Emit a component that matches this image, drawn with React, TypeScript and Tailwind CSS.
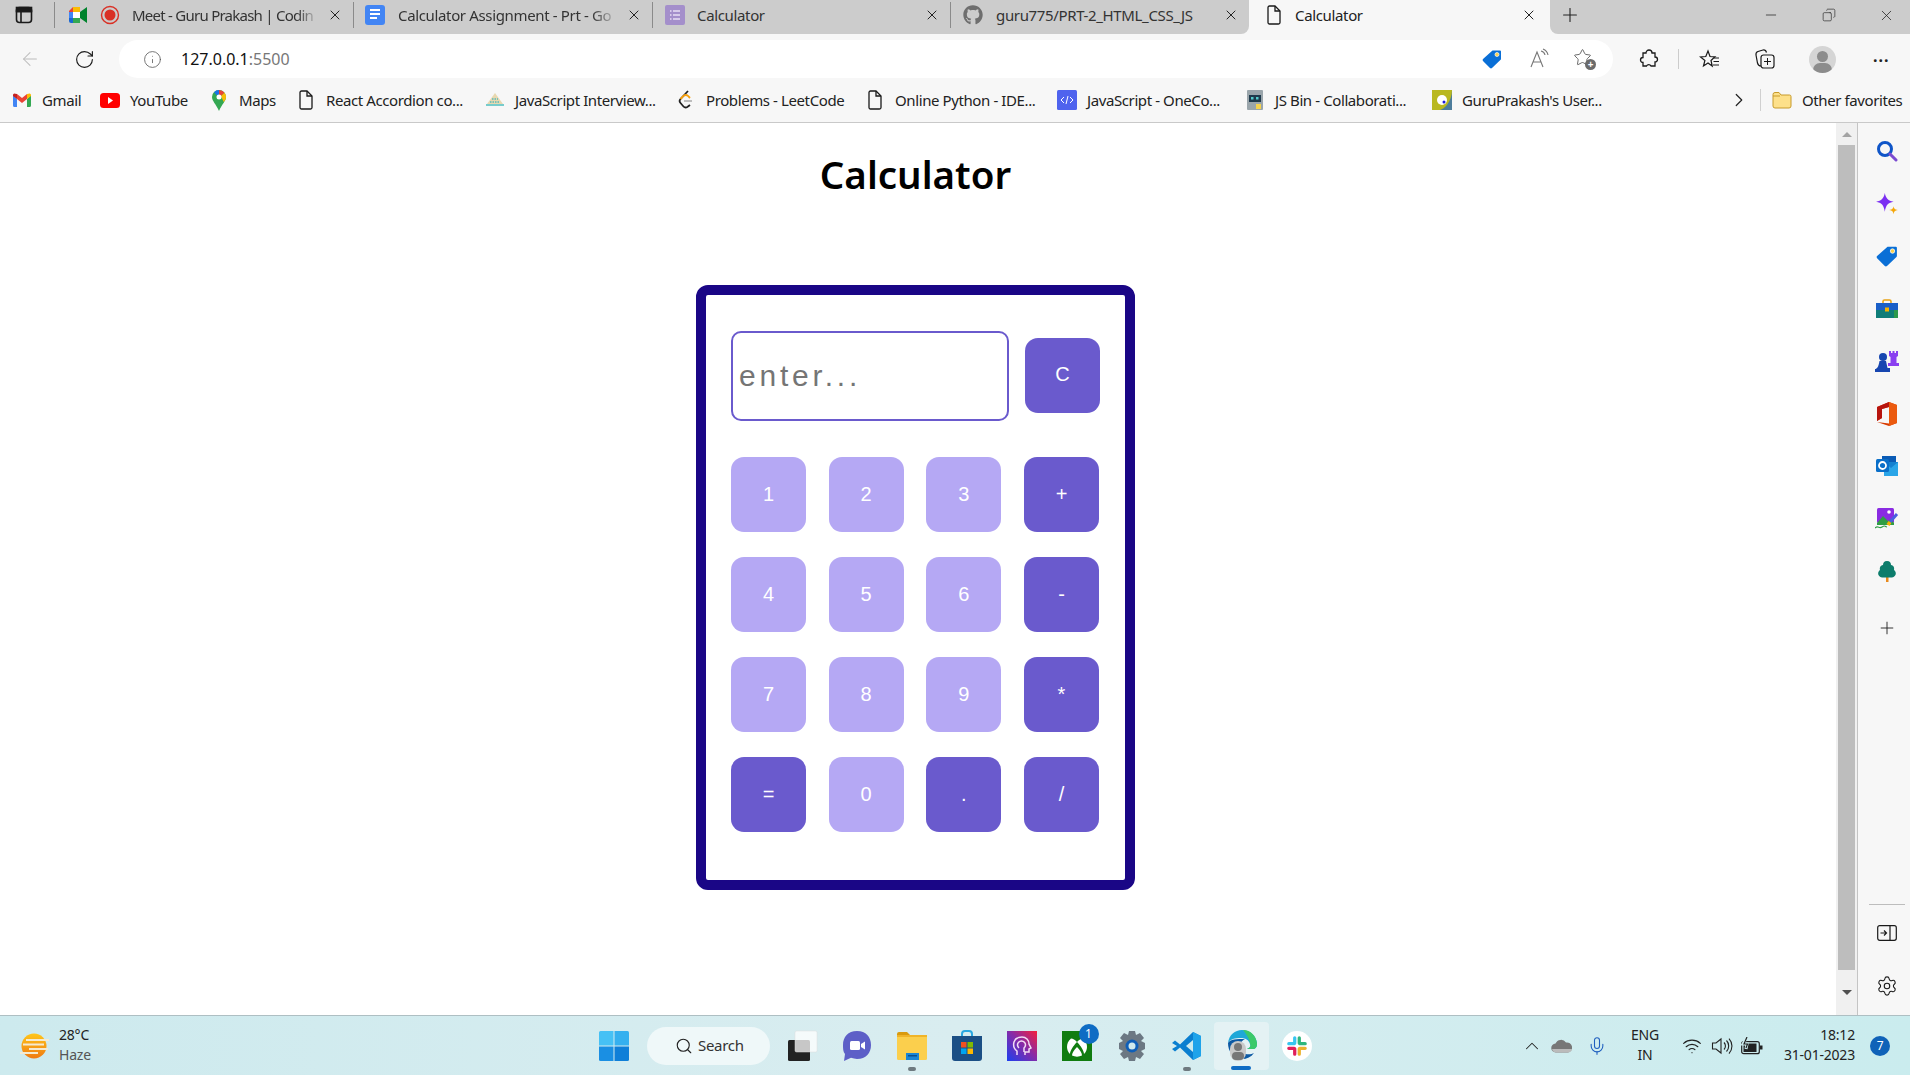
import React from "react";
import { ArrowLeft, RotateCw, Info, X, Plus, Minus, ChevronRight, ChevronUp, Mic, Wifi, Settings, Search, Star, Copy } from "lucide-react";
import { FaGithub } from "react-icons/fa";

const ui = "font-['Noto_Sans','Open_Sans',sans-serif]";

const SideTabs = () => (
  <svg width="18" height="18" viewBox="0 0 18 18" fill="none" stroke="#1a1a1a" strokeWidth="1.6"><rect x="1.5" y="1.5" width="15" height="15" rx="3" /><path d="M1.5 5.5h15M6 5.5v11" /><rect x="1.5" y="1.5" width="15" height="4" fill="#1a1a1a" /></svg>
);
const MeetIcon = () => (
  <svg width="20" height="18" viewBox="0 0 20 18"><path d="M1 5l4-4v5H1z" fill="#ea4335" /><path d="M5 1h7v5H5z" fill="#fbbc04" /><path d="M1 6h4v6H1z" fill="#4285f4" /><path d="M1 12h4v5H3a2 2 0 0 1-2-2z" fill="#1967d2" /><path d="M5 12h7v5H5z" fill="#34a853" /><path d="M12 1v5l7-5v16l-7-5v5a0 0 0 0 0 0 0z" fill="#00832d" /><path d="M5 6h7v6H5z" fill="#fff" /></svg>
);
const RecIcon = () => (
  <svg width="20" height="20" viewBox="0 0 20 20"><circle cx="10" cy="10" r="8.5" fill="none" stroke="#d93025" strokeWidth="1.4" /><circle cx="10" cy="10" r="5.5" fill="#d93025" /></svg>
);
const DocsIcon = () => (
  <svg width="20" height="20" viewBox="0 0 20 20"><rect width="20" height="20" rx="3" fill="#4285f4" /><path d="M5 5h10M5 9h10M5 13h7" stroke="#fff" strokeWidth="2" /></svg>
);
const FormsIcon = () => (
  <svg width="20" height="20" viewBox="0 0 20 20"><rect width="20" height="20" rx="2" fill="#a48fcb" /><path d="M8 6h7M8 10h7M8 14h7M5 6h1.5M5 10h1.5M5 14h1.5" stroke="#e8e0f5" strokeWidth="1.7" /></svg>
);
const PageIcon = ({ size = 20 }: { size?: number }) => (
  <svg width={size} height={size} viewBox="0 0 20 20" fill="none" stroke="#1a1a1a" strokeWidth="1.3"><path d="M4 2.5A1.5 1.5 0 0 1 5.500 1H11l5 5v11.500a1.500 1.500 0 0 1-1.500 1.500h-9A1.500 1.500 0 0 1 4 17.500z" /><path d="M11 1v5h5" /></svg>
);

const tabs = [
  { title: "Meet - Guru Prakash | Codin", icons: [<MeetIcon key="a" />, <RecIcon key="b" />], pl: "pl-[14px]", gap: "gap-[12px]", tgap: "ml-[12px]", text: "tracking-[-0.75px] [mask-image:linear-gradient(to_right,black_88%,transparent)]" },
  { title: "Calculator Assignment - Prt - Go", icons: [<DocsIcon key="a" />], pl: "pl-[12px]", gap: "", tgap: "ml-[13px]", text: "tracking-[-0.35px] [mask-image:linear-gradient(to_right,black_88%,transparent)]" },
  { title: "Calculator", icons: [<FormsIcon key="a" />], pl: "pl-[13px]", gap: "", tgap: "ml-[12px]", text: "tracking-[-0.35px]" },
  { title: "guru775/PRT-2_HTML_CSS_JS", icons: [<FaGithub key="a" size={20} color="#6e6e6e" />], pl: "pl-[13px]", gap: "", tgap: "ml-[13px]", text: "tracking-[-0.35px]" },
];

const Tab = ({ t, w }: { t: (typeof tabs)[number]; w: string }) => (
  <div className={`${w} h-[34px] flex items-center relative pb-[4px] ${t.pl}`}>
    <span className="absolute left-0 top-[2px] h-[26px] w-px bg-[#8a8a8a]" />
    <div className={`flex items-center shrink-0 ${t.gap}`}>{t.icons}</div>
    <span className={`${t.tgap} flex-1 min-w-0 whitespace-nowrap text-[15px] text-[#333] ${t.text}`}>{t.title}</span>
    <X size={16} strokeWidth={1.5} color="#222" className="ml-[8px] mr-[10px] shrink-0" />
  </div>
);

const TabStrip = () => (
  <div className="flex h-[34px] bg-[#f7f7f7]">
    <div className="flex bg-[#cccccc] rounded-br-lg">
      <div className="w-[54px] flex items-center pl-[15px] pb-[4px]"><SideTabs /></div>
      {tabs.map((t, i) => <Tab key={i} t={t} w={i === 2 ? "w-[298px]" : "w-[299px]"} />)}
    </div>
    <div className="w-[301px] flex items-center pl-[15px] pb-[4px] bg-[#f7f7f7]">
      <PageIcon />
      <span className="ml-[11px] flex-1 text-[15px] text-[#222] tracking-[-0.35px]">Calculator</span>
      <X size={16} strokeWidth={1.5} color="#222" className="mr-[13px]" />
    </div>
    <div className="flex-1 flex items-center pb-[4px] bg-[#cccccc] rounded-bl-lg">
      <Plus size={22} strokeWidth={1.2} color="#222" className="ml-[9px]" />
      <Minus size={16} strokeWidth={1.1} color="#222" className="ml-[182px]" />
      <Copy size={14} strokeWidth={1.1} color="#222" className="ml-[43px] -scale-x-100" />
      <X size={17} strokeWidth={1.1} color="#222" className="ml-[42px]" />
    </div>
  </div>
);

const PriceTag = ({ size = 20 }: { size?: number }) => (
  <svg width={size} height={size} viewBox="0 0 20 20"><path d="M10.500 1.500H18a1 1 0 0 1 1 1V10a1 1 0 0 1-.4.800L10 19a1.500 1.500 0 0 1-2 0L1 12a1.500 1.500 0 0 1 0-2z" fill="#0a6fd6" /><circle cx="15" cy="5.500" r="2" fill="#fbd24e" stroke="#fff" strokeWidth=".7" /></svg>
);
const ReadAloud = () => (
  <svg width="22" height="22" viewBox="0 0 22 22" fill="none" stroke="#777" strokeWidth="1.1"><path d="M2 19L8 4l6 15M4.500 14h7" /><path d="M12 3a5 5 0 0 1 4 4M14 1a8 8 0 0 1 5 6" /></svg>
);
const FavAdd = () => (
  <div className="relative w-[22px] h-[22px]">
    <Star size={19} strokeWidth={1.1} color="#555" className="absolute left-0 top-0" />
    <span className="absolute right-[-1px] bottom-0 w-[11px] h-[11px] rounded-full bg-[#6b6b6b] text-white text-[10px] leading-[10px] text-center font-bold">+</span>
  </div>
);
const PuzzleIcon = () => (
  <svg width="20" height="20" viewBox="0 0 20 20" fill="none" stroke="#1a1a1a" strokeWidth="1.3"><path d="M7 4a3 3 0 0 1 6 0h3v4a2.500 2.500 0 0 1 0 5v4h-4a2.500 2.500 0 0 0-4.500 0H4v-3.500a2.500 2.500 0 0 1 0-5V4z" /></svg>
);
const FavList = () => (
  <svg width="22" height="20" viewBox="0 0 22 20" fill="none" stroke="#1a1a1a" strokeWidth="1.2"><path d="M9 2l2 5.500 5 .3-4 3.700 1.200 5.500L9 14l-4.500 3 1.400-5.500L1.500 8l5.300-.5z" /><path d="M15 9h5M14.500 12.500h5.500M14 16h6" /></svg>
);
const Collections = () => (
  <svg width="22" height="22" viewBox="0 0 22 22" fill="none" stroke="#1a1a1a" strokeWidth="1.2"><rect x="7" y="7" width="13" height="13" rx="2.500" /><path d="M13.500 10v7M10 13.500h7" strokeWidth="1" /><path d="M7 18c-2 0-3-1-3.500-3L2 7c-.3-2 .5-3 2-3.500L9 2c2-.3 3 .5 3.500 2.500" /></svg>
);
const Avatar = () => (
  <div className="w-[27px] h-[27px] rounded-full bg-[#d5d5d5] overflow-hidden relative">
    <span className="absolute left-[8px] top-[5px] w-[11px] h-[11px] rounded-full bg-[#8c8c8c]" />
    <span className="absolute left-[4px] top-[17px] w-[19px] h-[14px] rounded-full bg-[#8c8c8c]" />
  </div>
);

const Toolbar = () => (
  <div className="h-[44px] bg-[#f7f7f7] flex items-end">
    <div className="h-[38px] flex items-center w-full">
      <ArrowLeft size={22} strokeWidth={1.1} color="#bcbcbc" className="ml-[19px]" />
      <RotateCw size={21} strokeWidth={1.3} color="#1a1a1a" className="ml-[33px]" />
      <div className="ml-[24px] w-[1494px] h-[38px] rounded-full bg-white flex items-center">
        <Info size={19} strokeWidth={1} color="#555" className="ml-[24px]" />
        <span className="ml-[19px] text-[16px] text-[#111]">127.0.0.1<span className="text-[#777]">:5500</span></span>
        <div className="ml-auto"><PriceTag /></div>
        <div className="ml-[27px]"><ReadAloud /></div>
        <div className="ml-[22px] mr-[18px]"><FavAdd /></div>
      </div>
      <div className="ml-[26px]"><PuzzleIcon /></div>
      <span className="ml-[19px] w-px h-[20px] bg-[#ccc]" />
      <div className="ml-[20px]"><FavList /></div>
      <div className="ml-[33px]"><Collections /></div>
      <div className="ml-[33px]"><Avatar /></div>
      <span className="ml-[37px] text-[#222] text-[16px] font-bold leading-none tracking-[1px] -mt-[6px]">...</span>
    </div>
  </div>
);

const GmailIcon = () => (
  <svg width="18" height="14" viewBox="0 0 18 14"><path d="M0 2v10.500A1.500 1.500 0 0 0 1.500 14H4V6z" fill="#4285f4" /><path d="M18 2v10.500a1.500 1.500 0 0 1-1.500 1.500H14V6z" fill="#34a853" /><path d="M14 1v5l4-3V2a1.500 1.500 0 0 0-2.400-1.200z" fill="#fbbc04" /><path d="M4 6V1l5 4 5-4v5L9 10z" fill="#ea4335" /><path d="M0 2v1l4 3V1L2.400.800A1.500 1.500 0 0 0 0 2z" fill="#c5221f" /></svg>
);
const YtIcon = () => (
  <svg width="20" height="15" viewBox="0 0 20 15"><rect width="20" height="15" rx="3.500" fill="#f00" /><path d="M8 4l5 3.500-5 3.500z" fill="#fff" /></svg>
);
const MapsIcon = () => (
  <svg width="14" height="21" viewBox="0 0 14 21"><path d="M7 0a7 7 0 0 1 7 7c0 4-4 7-7 14C4 14 0 11 0 7a7 7 0 0 1 7-7z" fill="#34a853" /><path d="M2 2.200A7 7 0 0 1 7 0v4.500a2.500 2.500 0 0 0-2 1z" fill="#1a73e8" /><path d="M7 0a7 7 0 0 1 5.500 2.700L9 6a2.500 2.500 0 0 0-2-1.500z" fill="#ea4335" /><path d="M12.500 2.700A7 7 0 0 1 14 7c0 2-1 3.500-2.300 5L9 6z" fill="#fbbc04" /><circle cx="7" cy="7" r="2.500" fill="#fff" /></svg>
);
const PyrIcon = () => (
  <svg width="20" height="16" viewBox="0 0 20 16"><path d="M10 1L2 12h16z" fill="#e8d8b0" /><path d="M1 12h18v2H1z" fill="#7cc" /><path d="M7 7h6M5 10h10" stroke="#5bb" strokeWidth="1.5" strokeDasharray="1.500 1" /></svg>
);
const LeetIcon = () => (
  <svg width="16" height="20" viewBox="0 0 16 20" fill="none"><path d="M10 1L2.500 9a3 3 0 0 0 0 4l3 3.500a3 3 0 0 0 4.500 0L12 15" stroke="#222" strokeWidth="1.800" /><path d="M2.500 9l3-3a3 3 0 0 1 4.500 0L12 8" stroke="#f59e0b" strokeWidth="1.800" /><path d="M6 11h8" stroke="#aaa" strokeWidth="1.500" /></svg>
);
const OneIcon = () => (
  <svg width="20" height="20" viewBox="0 0 20 20"><rect width="20" height="20" rx="1.500" fill="#4f63ee" /><path d="M7 7l-3 3 3 3M13 7l3 3-3 3M11 6l-2 8" stroke="#fff" strokeWidth="1" fill="none" /></svg>
);
const BinIcon = () => (
  <svg width="16" height="20" viewBox="0 0 16 20"><rect width="16" height="20" rx="1" fill="#9aa5ab" /><rect x="2" y="5" width="12" height="7" fill="#1f3a4d" /><rect x="4" y="7" width="2.500" height="2.500" fill="#5cc" /><rect x="9" y="7" width="2.500" height="2.500" fill="#5cc" /><rect x="9" y="14" width="5" height="5" fill="#f5d24e" /></svg>
);
const GuruIcon = () => (
  <svg width="20" height="20" viewBox="0 0 20 20"><rect width="20" height="20" fill="#b9b820" /><path d="M20 0v20H8c4-1 12-8 12-20z" fill="#4d7d9c" /><circle cx="10" cy="10" r="5" fill="#fff" /><circle cx="12" cy="12" r="1.500" fill="#1a1add" /></svg>
);
const FolderIcon = () => (
  <svg width="20" height="18" viewBox="0 0 20 18"><path d="M1 3.500A2 2 0 0 1 3 1.500h4l2 2.500h8.500a1.500 1.500 0 0 1 1.500 1.500V15a2 2 0 0 1-2 2H3a2 2 0 0 1-2-2z" fill="#fde08a" stroke="#c79a2b" strokeWidth="1" /><path d="M1 5h7" stroke="#c79a2b" strokeWidth="1" /></svg>
);

const bookmarks = [
  { n: "Gmail", i: <GmailIcon />, w: "w-[38px]" },
  { n: "YouTube", i: <YtIcon />, w: "w-[59px]" },
  { n: "Maps", i: <MapsIcon />, w: "w-[37px]" },
  { n: "React Accordion co...", i: <PageIcon />, w: "w-[139px]" },
  { n: "JavaScript Interview...", i: <PyrIcon />, w: "w-[141px]" },
  { n: "Problems - LeetCode", i: <LeetIcon />, w: "w-[139px]" },
  { n: "Online Python - IDE...", i: <PageIcon />, w: "w-[142px]" },
  { n: "JavaScript - OneCo...", i: <OneIcon />, w: "w-[138px]" },
  { n: "JS Bin - Collaborati...", i: <BinIcon />, w: "w-[137px]" },
  { n: "GuruPrakash's User...", i: <GuruIcon />, w: "w-[139px]" },
];

const Bookmarks = () => (
  <div className="h-[45px] bg-[#f7f7f7] border-b border-[#c9c9c9] flex items-center pl-[12px]">
    <div className="flex items-center gap-x-[20px]">
      {bookmarks.map((b) => (
        <div key={b.n} className="flex items-center">
          <div className="w-[20px] flex justify-center">{b.i}</div>
          <span className={`${b.w} ml-[10px] whitespace-nowrap text-[15px] text-[#222] tracking-[-0.4px]`}>{b.n}</span>
        </div>
      ))}
    </div>
    <ChevronRight size={22} strokeWidth={1.3} color="#222" className="ml-[127px]" />
    <span className="ml-[10px] w-px h-[22px] bg-[#d0d0d0]" />
    <div className="ml-[11px]"><FolderIcon /></div>
    <span className="ml-[10px] whitespace-nowrap text-[15px] text-[#222] tracking-[-0.4px]">Other favorites</span>
  </div>
);

const Key = ({ k, dark }: { k: string; dark?: boolean }) => (
  <button className={`w-[75px] h-[75px] pb-[2px] rounded-[13px] text-white text-[20px] ${dark ? "bg-[#6a5acd]" : "bg-[#b5a8f4]"}`}>{k}</button>
);

const keys: [string, boolean][] = [
  ["1", false], ["2", false], ["3", false], ["+", true],
  ["4", false], ["5", false], ["6", false], ["-", true],
  ["7", false], ["8", false], ["9", false], ["*", true],
  ["=", true], ["0", false], [".", true], ["/", true],
];

const Calculator = () => (
  <div className="w-[1831px] flex flex-col items-center font-['Liberation_Sans',Arial,sans-serif]">
    <h1 className={`mt-[28px] h-[46px] text-[38.5px] leading-[46px] font-semibold text-black ${ui}`}>Calculator</h1>
    <div className="mt-[88px] w-[439px] h-[605px] border-[10px] border-[#1a0686] rounded-[12px] bg-white pl-[25px] pt-[36px]">
      <div className="flex items-center">
        <input readOnly placeholder="enter..." className="w-[278px] h-[90px] border-2 border-[#6a5acd] rounded-[10px] px-[6px] text-[30px] tracking-[3.8px] outline-none placeholder:text-[#757575]" />
        <button className="ml-[16px] -mt-[2px] w-[75px] h-[75px] pb-[2px] rounded-[13px] bg-[#6a5acd] text-white text-[20px]">C</button>
      </div>
      <div className="mt-[36px] grid grid-cols-[75px_75px_75px_75px] gap-x-[22.67px] gap-y-[25px]">
        {keys.map(([k, d]) => <Key key={k} k={k} dark={d} />)}
      </div>
    </div>
  </div>
);

const Scrollbar = () => (
  <div className="w-[22px] bg-[#f0f0f0] border-r border-[#c4c4c4] flex flex-col items-center">
    <div className="h-[22px] flex items-center justify-center"><span className="w-0 h-0 border-x-[5px] border-x-transparent border-b-[5px] border-b-[#a3a3a3]" /></div>
    <div className="w-[17px] h-[825px] bg-[#bdbdbd]" />
    <div className="flex-1 flex items-center justify-center"><span className="w-0 h-0 border-x-[5px] border-x-transparent border-t-[5px] border-t-[#505050]" /></div>
  </div>
);

const SideSearch = () => (
  <svg width="22" height="22" viewBox="0 0 22 22" fill="none"><circle cx="9" cy="9" r="6.500" stroke="#0f55c8" strokeWidth="3" /><path d="M14 14l6 6" stroke="#7a4bd0" strokeWidth="3" strokeLinecap="round" /></svg>
);
const SideSpark = () => (
  <svg width="24" height="24" viewBox="0 0 22 22"><path d="M9 1c1 5 3 7 8 8-5 1-7 3-8 9-1-6-3-8-8-9 5-1 7-3 8-8z" fill="#7b2ff2" /><path d="M17 13c.4 2 1 3 4 3.500-3 .5-3.600 1.500-4 4-.4-2.500-1-3.500-4-4 3-.5 3.600-1.500 4-3.500z" fill="#f5a70a" /></svg>
);
const SideTool = () => (
  <svg width="22" height="20" viewBox="0 0 22 20"><path d="M7 5V2.500A1.500 1.500 0 0 1 8.500 1h5A1.500 1.500 0 0 1 15 2.500V5" fill="none" stroke="#e8a317" strokeWidth="1.600" /><rect y="4" width="22" height="7" fill="#1a5fc8" /><rect y="11" width="22" height="8" fill="#0f7d78" /><rect x="18" y="11" width="4" height="8" fill="#2c9a4b" /><rect x="9" y="8.500" width="4" height="4" fill="#f5b400" /></svg>
);
const SideChess = () => (
  <svg width="24" height="24" viewBox="0 0 24 24"><path d="M14 2h2v2h1.500V2h2v2H21V2h2v5l-1.500 1v6H24v3H13v-3h2.500V8L14 7z" fill="#8a3ff0" /><circle cx="8" cy="8" r="4" fill="#1746b0" /><path d="M5 12h6l1.500 7H15v4H0v-3c2 0 3.500-2 4.500-8z" fill="#1746b0" /></svg>
);
const SideOffice = () => (
  <svg width="20" height="24" viewBox="0 0 20 24"><path d="M0 5l12-5 8 3v18l-8 3-12-4 12 1.500V5L5 7v9l-5 3z" fill="#d83b01" /><path d="M0 5l12-5v5L5 7v9l-5 3z" fill="#b7140e" /><path d="M12 0l8 3v18l-8 3z" fill="#eb5a0f" /></svg>
);
const SideOutlook = () => (
  <svg width="22" height="20" viewBox="0 0 22 20"><rect x="6" y="0" width="14" height="10" fill="#0a5bb5" /><path d="M8 6h14v14H8z" fill="#2aa5e8" /><path d="M8 6l7 6 7-6z" fill="#1480d0" /><rect y="3" width="13" height="13" rx="1.500" fill="#0a6fc9" /><circle cx="6.500" cy="9.500" r="3.500" fill="none" stroke="#fff" strokeWidth="1.800" /></svg>
);
const SideImage = () => (
  <svg width="24" height="22" viewBox="0 0 24 22"><rect x="2" y="0" width="17" height="15" rx="1.500" fill="#8a2be2" /><path d="M2 15l6-7 5 5 3-2 3 4v2H2z" fill="#2f9e44" /><circle cx="14" cy="4" r="1.800" fill="#fff" /><path d="M22 6l-7 8" stroke="#4a5fe0" strokeWidth="3" /><path d="M15 14l-2 3" stroke="#f5b400" strokeWidth="3.500" /><path d="M0 20c3-3 4 1 7-1s2-1 5 0" stroke="#2f9e44" strokeWidth="1.200" fill="none" /></svg>
);
const SideTree = () => (
  <svg width="20" height="21" viewBox="0 0 20 21"><path d="M9 16h2.500v5H9z" fill="#e88a1d" /><path d="M10 0c3 0 4 2 4 4 3 .5 3.500 3 3 5 2.500 1.500 3 6.500-2 7.500H5C0 15.500.5 10.500 3 9c-.5-2 0-4.500 3-5 0-2 1-4 4-4z" fill="#0d7d6c" /></svg>
);
const SidePanel = () => (
  <svg width="20" height="16" viewBox="0 0 20 16" fill="none" stroke="#1a1a1a" strokeWidth="1.200"><rect x=".7" y=".7" width="18.600" height="14.600" rx="2" /><path d="M13 1v14M3.500 8h6M7 5.500L9.500 8 7 10.500" /></svg>
);

const sideIcons = [<SideSearch />, <SideSpark />, <PriceTag size={22} />, <SideTool />, <SideChess />, <SideOffice />, <SideOutlook />, <SideImage />, <SideTree />];

const Sidebar = () => (
  <div className="flex-1 bg-[#f7f7f7] flex flex-col items-center pl-[5px]">
    <div className="mt-[16px] flex flex-col items-center gap-y-[28.5px]">
      {sideIcons.map((ic, i) => <div key={i} className="h-[24px] flex items-center justify-center">{ic}</div>)}
    </div>
    <Plus size={20} strokeWidth={1.1} color="#222" className="mt-[35px]" />
    <span className="mt-[266px] w-[36px] h-px bg-[#bdbdbd]" />
    <div className="mt-[20px]"><SidePanel /></div>
    <Settings size={22} strokeWidth={1.2} color="#1a1a1a" className="mt-[34px]" />
  </div>
);

const WinIcon = () => (
  <svg width="30" height="30" viewBox="0 0 30 30"><path d="M0 1.500A1.500 1.500 0 0 1 1.500 0h13v14.500H0z" fill="#46c1f5" /><path d="M15.500 0h13A1.500 1.500 0 0 1 30 1.500v13H15.500z" fill="#35b0ef" /><path d="M0 15.500h14.500V30h-13A1.500 1.500 0 0 1 0 28.500z" fill="#1a8fe3" /><path d="M15.500 15.500H30v13a1.500 1.500 0 0 1-1.500 1.500h-13z" fill="#0f7fd8" /></svg>
);
const TaskView = () => (
  <svg width="32" height="32" viewBox="0 0 32 32"><rect x="2" y="10" width="22" height="21" rx="1.500" fill="#222" /><rect x="9" y="1" width="22" height="21" rx="1.500" fill="#fff" fillOpacity=".75" stroke="#ddd" strokeWidth=".5" /></svg>
);
const ChatIcon = () => (
  <svg width="30" height="32" viewBox="0 0 30 32"><path d="M15 1c9 0 14 6 14 14s-5 14-14 14c-2 0-4-.5-6-1.200L2 31l1-7C1 22 1 18 1 15 1 7 6 1 15 1z" fill="#5d5fc7" /><rect x="8" y="11" width="10" height="9" rx="1.500" fill="#fff" /><path d="M19 14l4-2.500v8L19 17z" fill="#fff" /></svg>
);
const Explorer = () => (
  <svg width="32" height="30" viewBox="0 0 32 30"><path d="M1 3a2 2 0 0 1 2-2h8l3 3h-13z" fill="#d99a0f" /><rect x="1" y="4" width="30" height="25" rx="1.500" fill="#fbcf4d" /><path d="M1 4h30v2H1z" fill="#f0b429" /><rect x="10" y="22" width="13" height="7" fill="#1a86d6" /><rect x="12" y="24" width="9" height="1.500" fill="#0a4f8f" /></svg>
);
const Store = () => (
  <svg width="30" height="32" viewBox="0 0 30 32"><path d="M10 7V4a3 3 0 0 1 3-3h4a3 3 0 0 1 3 3v3" fill="none" stroke="#2aa7e0" strokeWidth="2" /><path d="M0 6h30v22a3 3 0 0 1-3 3H3a3 3 0 0 1-3-3z" fill="#1b4f85" /><rect x="9" y="12" width="5.500" height="5.500" fill="#f25022" /><rect x="15.500" y="12" width="5.500" height="5.500" fill="#7fba00" /><rect x="9" y="18.500" width="5.500" height="5.500" fill="#00a4ef" /><rect x="15.500" y="18.500" width="5.500" height="5.500" fill="#ffb900" /></svg>
);
const Podcast = () => (
  <svg width="30" height="30" viewBox="0 0 30 30"><defs><linearGradient id="pg" x1="0" y1="1" x2="1" y2="0"><stop offset="0" stopColor="#1c3ff0" /><stop offset=".55" stopColor="#8a2aa5" /><stop offset="1" stopColor="#f5203c" /></linearGradient></defs><rect width="30" height="30" fill="url(#pg)" /><path d="M10 24v-4c-3-2-4-5-3-9 1-3 4-5 8-5s7 3 7 7l2 4-2 1v3h-4v3M12 17a4 4 0 1 1 5 0v4" fill="none" stroke="#f2dcf5" strokeWidth="1.500" /></svg>
);
const Xbox = () => (
  <div className="relative w-[30px] h-[30px]">
    <svg width="30" height="30" viewBox="0 0 30 30"><rect width="30" height="30" fill="#107c10" /><path d="M15 11c-2-2-4-3.500-6-3.500C6 10 5 13 5 16c0 2.500 1 5 3 7 0-3 3-8 7-12zM15 11c2-2 4-3.500 6-3.500 3 2.500 4 5.500 4 8.500 0 2.500-1 5-3 7 0-3-3-8-7-12zM15 16c-3 3-5 6-5 8.500 3 1.500 7 1.500 10 0 0-2.500-2-5.500-5-8.500z" fill="#fff" /></svg>
    <span className="absolute -right-[7px] -top-[7px] w-[20px] h-[20px] rounded-full bg-[#0f6cc4] text-white text-[12px] leading-[20px] text-center">1</span>
  </div>
);
const GearApp = () => (
  <svg width="32" height="32" viewBox="0 0 32 32"><path d="M13 1h6l1 4 4-2 4 5-3 3 4 2v6l-4 2 3 3-4 5-4-2-1 4h-6l-1-4-4 2-4-5 3-3-4-2v-6l4-2-3-3 4-5 4 2z" fill="#6c7883" /><circle cx="16" cy="16" r="6.500" fill="#0f5fb8" /><circle cx="16" cy="16" r="3.500" fill="#cfeaee" /></svg>
);
const VsCode = () => (
  <svg width="30" height="30" viewBox="0 0 30 30"><path d="M21 1l8 4v20l-8 4-13-12.500-5 4L0 18l5-3-5-3 3-2.500 5 4z" fill="#0a7fd0" /><path d="M21 1l8 4v20l-8 4z" fill="#1ea3ea" /><path d="M21 9l-7 6 7 6z" fill="#cdebee" /></svg>
);
const Edge = () => (
  <div className="relative w-[30px] h-[32px]">
    <svg width="30" height="30" viewBox="0 0 30 30"><path d="M1 13C2 5 8 0 15 0c8 0 14 6 15 13 .3 3-1 6-4 6h-6c3-1 4-3 3-5-1-4-5-6-9-6-6 0-11 1-13 5z" fill="#1fa8d8" /><path d="M16 0c8 0 13 6 14 13 .3 3-1 6-4 6h-6c3-1 4-3 3-5 0-4-3-9-7-14z" fill="#3bc96a" /><path d="M1 13c0 8 5 16 14 16 5 0 9-2 12-6-5 3-14 1-14-6 0-3 1-6 5-8-8 0-15 0-17 4z" fill="#0c59a4" /></svg>
    <span className="absolute left-[3px] top-[11px] w-[16px] h-[20px] rounded-full bg-[#c9c9c9]" />
    <span className="absolute left-[7px] top-[13px] w-[8px] h-[8px] rounded-full bg-[#777]" />
    <span className="absolute left-[5px] top-[22px] w-[12px] h-[8px] rounded-full bg-[#777]" />
  </div>
);
const Slack = () => (
  <div className="w-[30px] h-[30px] rounded-full bg-white flex items-center justify-center">
    <svg width="20" height="20" viewBox="0 0 22 22" strokeWidth="3.600" strokeLinecap="round"><path d="M8.500 2v6M2 8.500h6" stroke="#36c5f0" /><path d="M20 8.500h-6M13.500 2v6" stroke="#2eb67d" /><path d="M13.500 20v-6M20 13.500h-6" stroke="#ecb22e" /><path d="M2 13.500h6M8.500 20v-6" stroke="#e01e5a" /></svg>
  </div>
);

const Sun = () => (
  <svg width="30" height="28" viewBox="0 0 30 28"><defs><linearGradient id="sg" x1="0" y1="0" x2="0" y2="1"><stop offset="0" stopColor="#ffc61a" /><stop offset="1" stopColor="#ef7a12" /></linearGradient></defs><circle cx="14" cy="14" r="12.500" fill="url(#sg)" /><path d="M6 8h23M3 12.500h21M9 17h19M0 21h18" stroke="#f5ead0" strokeWidth="2" /></svg>
);
const Cloud = () => (
  <svg width="22" height="14" viewBox="0 0 22 14"><path d="M5 13.500a4.500 4.500 0 0 1-.5-9A6 6 0 0 1 15 3.500a5 5 0 0 1 2 10z" fill="#777" /><path d="M1 10h20c0 2-2 3.500-4 3.500H5c-2 0-3.500-1.500-4-3.500z" fill="#bbb" /></svg>
);
const Volume = () => (
  <svg width="22" height="20" viewBox="0 0 22 20" fill="none" stroke="#222" strokeWidth="1.100"><path d="M1.500 7v6h3.500l5 4V3L5 7z" /><path d="M13 6.500a5 5 0 0 1 0 7M15.500 4.500a8 8 0 0 1 0 11M18 2.500a11 11 0 0 1 0 15" /></svg>
);
const Battery = () => (
  <svg width="22" height="18" viewBox="0 0 22 18"><rect x=".7" y="4.700" width="17.600" height="12" rx="2" fill="none" stroke="#222" strokeWidth="1.200" /><rect x="2.500" y="6.500" width="13" height="8.500" fill="#222" /><rect x="19" y="8.500" width="2.500" height="4" fill="#222" /><path d="M6 0L2 7h4l-1 5" stroke="#cdecee" strokeWidth="3" fill="none" /><path d="M6 0L3 7h3.500L5 11" stroke="#222" strokeWidth="1.200" fill="none" /></svg>
);

const dockApps = [<TaskView />, <ChatIcon />, <Explorer />, <Store />, <Podcast />, <Xbox />, <GearApp />, <VsCode />, <Edge />, <Slack />];

const Taskbar = () => (
  <div className={`h-[60px] shrink-0 border-t border-[#aebfc3] bg-gradient-to-r from-[#cdeaee] via-[#d9edf0] to-[#caecee] flex items-center ${ui}`}>
    <div className="w-[599px] flex items-center pl-[20px]">
      <Sun />
      <div className="ml-[9px] -mt-[2px] flex flex-col leading-[20px] text-[14px] tracking-[-0.2px]">
        <span className="text-[#222]">28°C</span>
        <span className="text-[#555]">Haze</span>
      </div>
    </div>
    <WinIcon />
    <div className="ml-[18px] w-[123px] h-[38px] rounded-full bg-[#eff8f9] flex items-center pl-[28px]">
      <Search size={18} strokeWidth={1.5} color="#222" />
      <span className="ml-[5px] -mt-[1px] text-[15px] text-[#333] tracking-[-0.3px]">Search</span>
    </div>
    <div className="ml-[4px] flex">
      {dockApps.map((a, i) => (
        <div key={i} className={`relative w-[55px] h-[48px] flex items-center justify-center ${i === 8 ? "rounded-[4px] bg-[#e4f2f4]" : ""}`}>
          {a}
          {(i === 2 || i === 7) && <span className="absolute bottom-[-1px] left-[24px] w-[8px] h-[4px] rounded-full bg-[#6e7a80]" />}
          {i === 8 && <span className="absolute bottom-[0px] left-[17px] w-[20px] h-[4px] rounded-full bg-[#0f6cc4]" />}
        </div>
      ))}
    </div>
    <div className="ml-[193px] flex items-center text-[14px] text-[#222] tracking-[-0.2px]">
      <div className="w-[30px] flex justify-center"><ChevronUp size={22} strokeWidth={1.1} color="#222" /></div>
      <div className="w-[30px] flex justify-center"><Cloud /></div>
      <div className="ml-[5px] w-[30px] flex justify-center"><Mic size={20} strokeWidth={1.3} color="#1f5fbf" /></div>
      <div className="ml-[13px] -mt-[2px] w-[40px] flex flex-col items-center leading-[20px]"><span>ENG</span><span>IN</span></div>
      <div className="ml-[12px] w-[30px] flex justify-center"><Wifi size={20} strokeWidth={1.4} color="#222" /></div>
      <div className="w-[30px] flex justify-center"><Volume /></div>
      <div className="w-[30px] flex justify-center"><Battery /></div>
      <div className="w-[88px] -mt-[2px] flex flex-col items-end leading-[20px]"><span>18:12</span><span>31-01-2023</span></div>
      <span className="ml-[15px] w-[20px] h-[20px] rounded-full bg-[#0f62b8] text-white text-[12px] leading-[20px] text-center">7</span>
    </div>
  </div>
);

export default function App() {
  return (
    <div className={`w-[1910px] h-[1075px] overflow-hidden flex flex-col bg-white ${ui}`}>
      <TabStrip />
      <Toolbar />
      <Bookmarks />
      <div className="h-[892px] flex">
        <div className="w-[1836px] bg-white"><Calculator /></div>
        <Scrollbar />
        <Sidebar />
      </div>
      <Taskbar />
    </div>
  );
}
